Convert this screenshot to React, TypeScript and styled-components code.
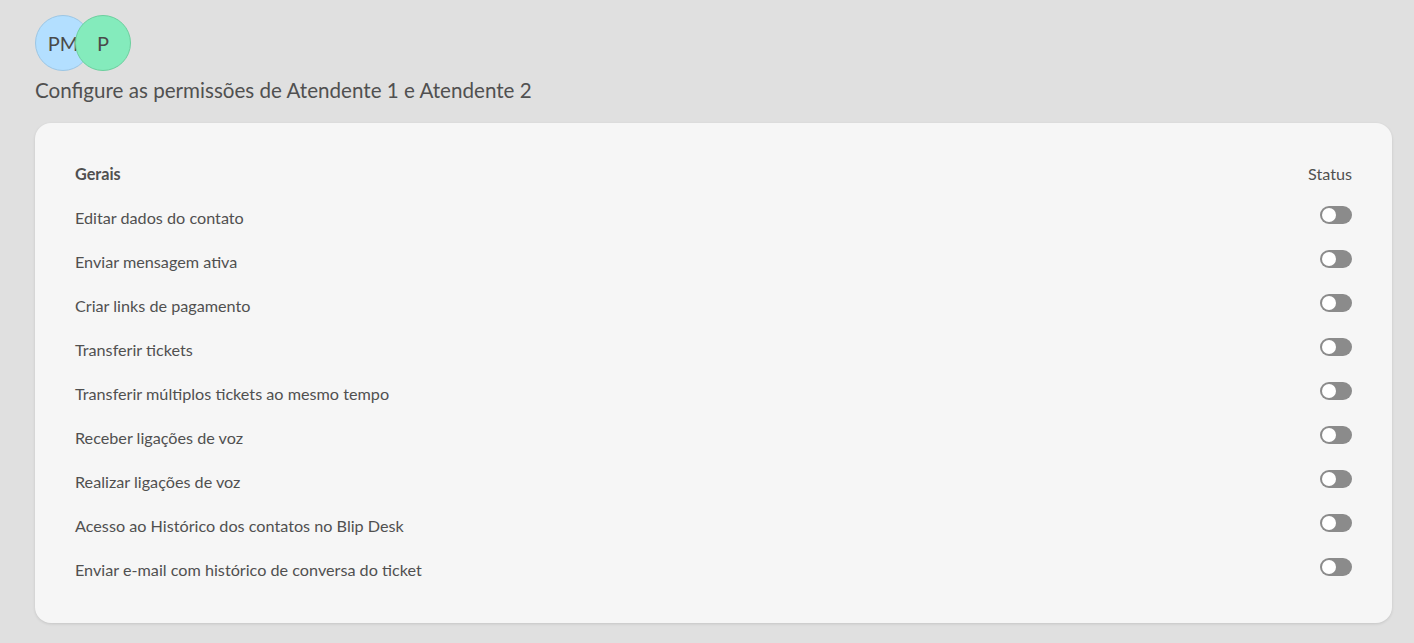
import React from "react";
import styled, { createGlobalStyle } from "styled-components";

const Global = createGlobalStyle`
  html, body { margin: 0; padding: 0; background: #e0e0e0; }
  body { font-family: "Lato", "Open Sans", sans-serif; color: #505050; }
`;

const Page = styled.div`
  padding: 15px 22px 20px 35px;
  display: flex;
  flex-direction: column;
`;

const AvatarGroup = styled.div`
  display: flex;
  height: 56px;
`;

const Avatar = styled.div<{ $bg: string; $border: string; $overlap?: boolean }>`
  width: 54px;
  height: 54px;
  border-radius: 50%;
  background: ${(p) => p.$bg};
  border: 1px solid ${(p) => p.$border};
  display: flex;
  align-items: center;
  justify-content: center;
  font-size: 20px;
  color: #4a4a4a;
  margin-left: ${(p) => (p.$overlap ? "-16px" : "0")};
`;

const Title = styled.h1`
  margin: 7px 0 0;
  font-size: 20.6px;
  font-weight: 400;
  line-height: 24px;
  color: #505050;
`;

const Card = styled.section`
  margin-top: 21px;
  background: #f6f6f6;
  border-radius: 16px;
  box-shadow: 0 1px 3px rgba(0, 0, 0, 0.12);
  padding: 39px 40px 43px 40px;
  display: flex;
  flex-direction: column;
`;

const Row = styled.div`
  display: flex;
  align-items: center;
  justify-content: space-between;
  height: 22px;
  & + & {
    margin-top: 22px;
  }
`;

const Label = styled.span<{ $bold?: boolean }>`
  font-size: 16.2px;
  font-weight: ${(p) => (p.$bold ? 700 : 400)};
  color: #505050;
`;

const Toggle = styled.span`
  position: relative;
  width: 32px;
  height: 18px;
  border-radius: 9px;
  background: #8b8b8b;
  margin-top: -4px;
  &::after {
    content: "";
    position: absolute;
    left: 2px;
    top: 2px;
    width: 14px;
    height: 14px;
    border-radius: 50%;
    background: #ffffff;
  }
`;

const items = [
  "Editar dados do contato",
  "Enviar mensagem ativa",
  "Criar links de pagamento",
  "Transferir tickets",
  "Transferir múltiplos tickets ao mesmo tempo",
  "Receber ligações de voz",
  "Realizar ligações de voz",
  "Acesso ao Histórico dos contatos no Blip Desk",
  "Enviar e-mail com histórico de conversa do ticket",
];

export default function App() {
  return (
    <>
      <Global />
      <Page>
        <AvatarGroup>
          <Avatar $bg="#b3dfff" $border="#9cc6e4">PM</Avatar>
          <Avatar $bg="#84ebbc" $border="#6ccf9e" $overlap>P</Avatar>
        </AvatarGroup>
        <Title>Configure as permissões de Atendente 1 e Atendente 2</Title>
        <Card>
          <Row>
            <Label $bold>Gerais</Label>
            <Label>Status</Label>
          </Row>
          {items.map((t) => (
            <Row key={t}>
              <Label>{t}</Label>
              <Toggle />
            </Row>
          ))}
        </Card>
      </Page>
    </>
  );
}
